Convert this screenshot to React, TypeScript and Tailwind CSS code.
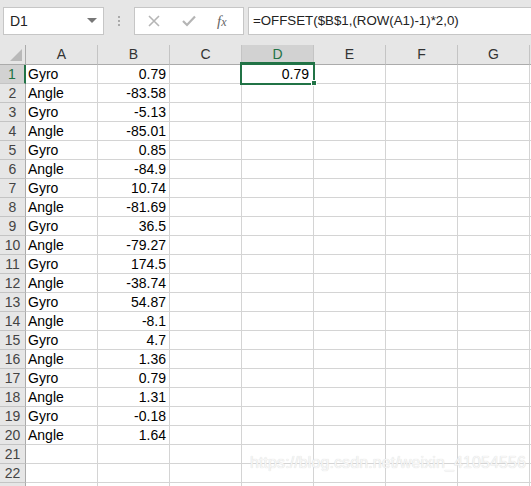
import React from "react";

const rows: [string, string][] = [
  ["Gyro", "0.79"],
  ["Angle", "-83.58"],
  ["Gyro", "-5.13"],
  ["Angle", "-85.01"],
  ["Gyro", "0.85"],
  ["Angle", "-84.9"],
  ["Gyro", "10.74"],
  ["Angle", "-81.69"],
  ["Gyro", "36.5"],
  ["Angle", "-79.27"],
  ["Gyro", "174.5"],
  ["Angle", "-38.74"],
  ["Gyro", "54.87"],
  ["Angle", "-8.1"],
  ["Gyro", "4.7"],
  ["Angle", "1.36"],
  ["Gyro", "0.79"],
  ["Angle", "1.31"],
  ["Gyro", "-0.18"],
  ["Angle", "1.64"],
  ["", ""],
  ["", ""],
  ["", ""],
];

const cols = ["A", "B", "C", "D", "E", "F", "G"];

export default function App() {
  return (
    <div className="relative w-[531px] h-[486px] overflow-hidden bg-[#e6e6e6] font-['Liberation_Sans',Arial,sans-serif] text-black">
      {/* Toolbar */}
      <div className="h-[45px] flex items-start pt-[7px]">
        <div className="ml-[3px] w-[101px] h-[28px] bg-white border border-[#c6c6c6] flex items-center justify-between pl-[6px] pr-[6px]">
          <span className="text-[14px] text-[#222]">D1</span>
          <svg width="10" height="6" viewBox="0 0 10 6">
            <polygon points="0,0 10,0 5,5" fill="#777" />
          </svg>
        </div>
        <div className="ml-[13px] w-[4px] h-[28px] flex flex-col items-center justify-center gap-[2px]">
          <div className="w-[2px] h-[2px] bg-[#aaa]" />
          <div className="w-[2px] h-[2px] bg-[#aaa]" />
          <div className="w-[2px] h-[2px] bg-[#aaa]" />
        </div>
        <div className="ml-[13px] w-[110px] h-[28px] bg-white border border-[#c6c6c6] flex items-center">
          <svg className="ml-[13px]" width="12" height="12" viewBox="0 0 12 12">
            <path d="M1 1 L11 11 M11 1 L1 11" stroke="#b5b5b5" strokeWidth="1.6" />
          </svg>
          <svg className="ml-[22px]" width="14" height="12" viewBox="0 0 14 12">
            <path d="M1 6 L5 10 L13 1.5" stroke="#b5b5b5" strokeWidth="2.2" fill="none" />
          </svg>
          <span className="ml-[21px] text-[15px] text-[#666] italic font-['Liberation_Serif',serif] leading-none">
            f<span className="text-[12px]">x</span>
          </span>
        </div>
        <div className="ml-[4px] flex-1 h-[28px] bg-white border border-[#c6c6c6] border-r-0 flex items-center pl-[4px]">
          <span className="text-[13.3px] text-[#222] whitespace-nowrap">=OFFSET($B$1,(ROW(A1)-1)*2,0)</span>
        </div>
      </div>

      {/* Grid */}
      <div className="grid grid-cols-[26px_repeat(7,72px)_1fr] grid-rows-[20px] auto-rows-[19px] text-[14px]">
        {/* header row */}
        <div className="relative bg-[#e6e6e6] border-r border-b border-[#ababab]">
          <svg className="absolute right-[3px] bottom-[3px]" width="12" height="12" viewBox="0 0 12 12">
            <polygon points="12,0 12,12 0,12" fill="#b9b9b9" />
          </svg>
        </div>
        {cols.map((c) =>
          c === "D" ? (
            <div
              key={c}
              className="bg-[#d2d2d2] border-r border-[#c4c4c4] border-b-2 border-b-[#217346] flex items-center justify-center pt-[1px] text-[#217346]"
            >
              {c}
            </div>
          ) : (
            <div
              key={c}
              className="bg-[#e6e6e6] border-r border-[#c4c4c4] border-b border-b-[#ababab] flex items-center justify-center text-[#333]"
            >
              {c}
            </div>
          )
        )}
        <div className="bg-[#e6e6e6] border-b border-[#ababab]" />

        {rows.map(([a, b], i) => (
          <React.Fragment key={i}>
            {i === 0 ? (
              <div className="bg-[#d2d2d2] border-r-2 border-r-[#217346] border-b border-b-[#c4c4c4] flex items-center justify-center text-[#217346]">
                {i + 1}
              </div>
            ) : (
              <div className="bg-[#e6e6e6] border-r border-r-[#ababab] border-b border-b-[#c4c4c4] flex items-center justify-center text-[#444]">
                {i < 22 ? i + 1 : ""}
              </div>
            )}
            <div className="bg-white border-r border-b border-[#d4d4d4] flex items-center pl-[2px] whitespace-nowrap">
              {a}
            </div>
            <div className="bg-white border-r border-b border-[#d4d4d4] flex items-center justify-end pr-[3px] whitespace-nowrap">
              {b}
            </div>
            <div className="bg-white border-r border-b border-[#d4d4d4]" />
            <div className="bg-white border-r border-b border-[#d4d4d4] flex items-center justify-end pr-[4px]">
              {i === 0 ? "0.79" : ""}
            </div>
            <div className="bg-white border-r border-b border-[#d4d4d4]" />
            <div className="bg-white border-r border-b border-[#d4d4d4]" />
            <div className="bg-white border-r border-b border-[#d4d4d4]" />
            <div className="bg-white border-b border-[#d4d4d4]" />
          </React.Fragment>
        ))}
      </div>

      {/* Selection of D1 */}
      <div className="absolute left-[240px] top-[62px] w-[75px] h-[23px] border-2 border-[#217346] pointer-events-none" />
      <div className="absolute left-[311px] top-[80px] w-[6px] h-[6px] bg-[#217346] border border-white" />

      {/* Watermark */}
      <div className="absolute left-[250px] top-[451px] text-[16px] text-[#f6f6f6] whitespace-nowrap [text-shadow:0_0_1px_#d0d0d0] tracking-[0.1px]">
        https://blog.csdn.net/weixin_41054556
      </div>
    </div>
  );
}
